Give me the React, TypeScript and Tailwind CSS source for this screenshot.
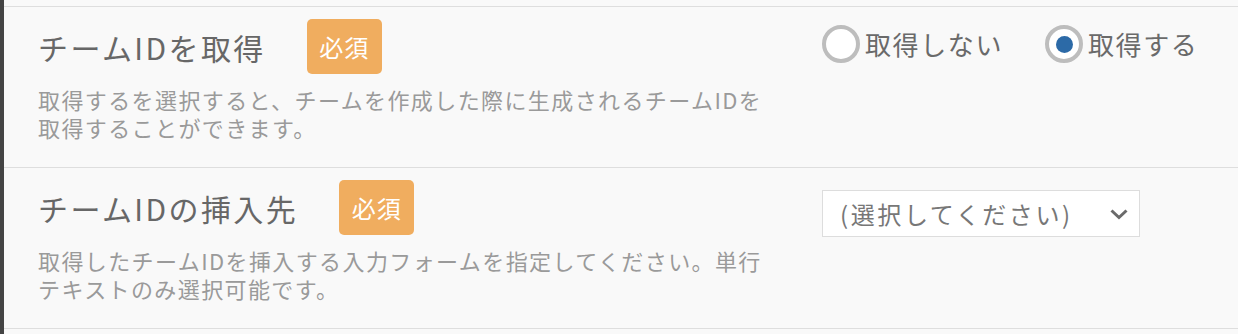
import React from "react";

const font = { fontFamily: '"Noto Sans CJK JP", "Noto Sans", sans-serif' };

function Badge() {
  return (
    <span className="ml-[41px] flex h-[55px] w-[75px] items-center justify-center rounded-[5px] bg-[#f0ad5f] text-[24px] leading-none tracking-[1px] text-white">
      必須
    </span>
  );
}

function Radio({ label, checked }: { label: string; checked?: boolean }) {
  return (
    <label className="flex items-center gap-[5px]">
      <span className="flex h-[38px] w-[38px] items-center justify-center rounded-full border-[4px] border-[#bdbdbd] bg-white">
        {checked && <span className="h-[17px] w-[17px] rounded-full bg-[#2c6aa7]" />}
      </span>
      <span className="text-[26px] leading-none tracking-[1.6px] text-[#6a6a6a]">{label}</span>
    </label>
  );
}

function Row({
  title,
  desc,
  children,
  rightClass,
}: {
  title: string;
  desc: string;
  children: React.ReactNode;
  rightClass: string;
}) {
  return (
    <div className="flex h-[161px] border-t border-[#dedede]">
      <div className="w-[784px] pl-[34px] pt-[12px]">
        <div className="flex items-center">
          <h3 className="text-[30px] font-normal leading-none tracking-[2.4px] text-[#676767]">{title}</h3>
          <Badge />
        </div>
        <p className="mt-[11px] w-[740px] text-[22px] leading-[28px] tracking-[1.4px] text-[#9a9a9a]">{desc}</p>
      </div>
      <div className={"ml-[34px] " + rightClass}>{children}</div>
    </div>
  );
}

export default function App() {
  return (
    <div className="flex h-[334px] w-[1238px] overflow-hidden bg-[#f9f9f9]" style={font}>
      <div className="w-[4px] shrink-0 bg-[#444444]" />
      <div className="flex-1 pt-[6px]">
        <Row
          title="チームIDを取得"
          desc="取得するを選択すると、チームを作成した際に生成されるチームIDを取得することができます。"
          rightClass="pt-[18px]"
        >
          <div className="flex items-center gap-[42px]">
            <Radio label="取得しない" />
            <Radio label="取得する" checked />
          </div>
        </Row>
        <div className="border-b border-[#dedede]">
          <Row
            title="チームIDの挿入先"
            desc="取得したチームIDを挿入する入力フォームを指定してください。単行テキストのみ選択可能です。"
            rightClass="pt-[22px]"
          >
            <div className="flex h-[47px] w-[318px] items-center justify-between border border-[#dddddd] bg-white pl-[17px] pr-[10px]">
              <span className="text-[24px] leading-none tracking-[2.6px] text-[#777777]">(選択してください)</span>
              <svg width="20" height="14" viewBox="0 0 20 14" fill="none">
                <path d="M2.5 3.5 L10 10.5 L17.5 3.5" stroke="#6a6a6a" strokeWidth="3" />
              </svg>
            </div>
          </Row>
        </div>
      </div>
    </div>
  );
}
